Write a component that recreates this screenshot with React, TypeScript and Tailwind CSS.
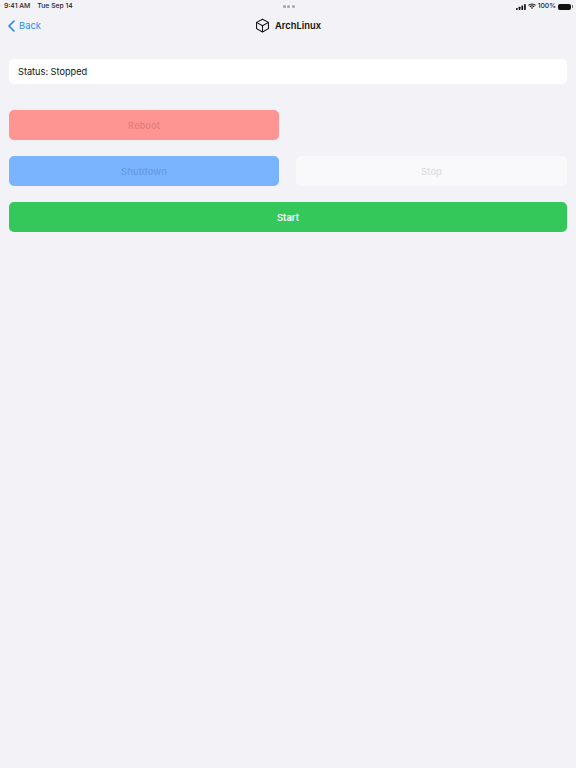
import React from "react";

function Btn({ label, cls, text }: { label: string; cls: string; text: string }) {
  return (
    <div className={`h-[30px] pt-[2px] rounded-[5px] flex items-center justify-center text-[9.4px] font-semibold ${cls} ${text}`}>
      {label}
    </div>
  );
}

export default function App() {
  return (
    <div className="w-[576px] h-[768px] bg-[#f2f2f7] font-['Inter','Liberation_Sans',sans-serif] text-black overflow-hidden flex flex-col">
      <div className="h-[12px] pl-[4px] pr-[3px] pt-[1px] flex items-center justify-between text-[6.8px] font-medium text-[#222]">
        <div className="flex gap-[7px] w-[100px]">
          <span>9:41 AM</span>
          <span>Tue Sep 14</span>
        </div>
        <div className="flex gap-[1.5px] items-center">
          <span className="w-[3px] h-[3px] rounded-full bg-[#a5a5a9]" />
          <span className="w-[3px] h-[3px] rounded-full bg-[#a5a5a9]" />
          <span className="w-[3px] h-[3px] rounded-full bg-[#a5a5a9]" />
        </div>
        <div className="flex items-center justify-end gap-[2px] w-[100px]">
          <svg width="10" height="6" viewBox="0 0 10 6" fill="#111">
            <rect x="0" y="4" width="1.7" height="2" rx=".4" />
            <rect x="2.7" y="2.8" width="1.7" height="3.2" rx=".4" />
            <rect x="5.4" y="1.4" width="1.7" height="4.6" rx=".4" />
            <rect x="8.1" y="0" width="1.7" height="6" rx=".4" />
          </svg>
          <svg width="8" height="6.5" viewBox="0 0 18 14" fill="none" stroke="#111" strokeWidth="2.4">
            <path d="M1 5a11.5 11.5 0 0 1 16 0" />
            <path d="M4 8.2a7.2 7.2 0 0 1 10 0" />
            <path d="M9 13l-2.4-2.6a3.4 3.4 0 0 1 4.8 0z" fill="#111" stroke="none" />
          </svg>
          <span>100%</span>
          <span className="flex items-center gap-[1px]">
            <span className="w-[13px] h-[6px] rounded-[2px] bg-[#111]" />
            <span className="w-[1px] h-[2.5px] bg-[#777]" />
          </span>
        </div>
      </div>

      <div className="h-[27px] relative flex items-center justify-center">
        <div className="absolute left-[8px] top-[7px] flex items-center gap-[4px] text-[#2e8ffa] text-[9.4px]">
          <svg width="7" height="12" viewBox="0 0 7 12" fill="none" stroke="#1f85fa" strokeWidth="1.6" strokeLinecap="round" strokeLinejoin="round">
            <path d="M6 1 1 6l5 5" />
          </svg>
          <span>Back</span>
        </div>
        <div className="flex items-center gap-[5px]">
          <svg width="15" height="15" viewBox="0 0 24 24" fill="none" stroke="#111" strokeWidth="1.7" strokeLinejoin="round">
            <path d="M12 2 21.5 7v10L12 22.5 2.5 17V7z" />
            <path d="M2.5 7 12 12.3 21.5 7M12 12.3v10" />
          </svg>
          <span className="pt-[1px] text-[9.4px] font-semibold text-[#111]">ArchLinux</span>
        </div>
      </div>

      <div className="px-[9px] pt-[20px] flex flex-col">
        <div className="h-[25px] bg-white rounded-[5px] flex items-center px-[9px] text-[9.2px] text-[#111]">
          Status: Stopped
        </div>
        <div className="flex flex-col gap-[16px] mt-[26px]">
          <div className="flex gap-[17px]">
            <div className="w-[270px]">
              <Btn label="Reboot" cls="bg-[#ff9592]" text="text-[#e58080]" />
            </div>
          </div>
          <div className="flex gap-[17px]">
            <div className="w-[270px]">
              <Btn label="Shutdown" cls="bg-[#7ab4ff]" text="text-[#689fe6]" />
            </div>
            <div className="flex-1">
              <Btn label="Stop" cls="bg-[#f9f9fb]" text="text-[#dfdfe3]" />
            </div>
          </div>
          <Btn label="Start" cls="bg-[#34c759]" text="text-white" />
        </div>
      </div>
    </div>
  );
}
